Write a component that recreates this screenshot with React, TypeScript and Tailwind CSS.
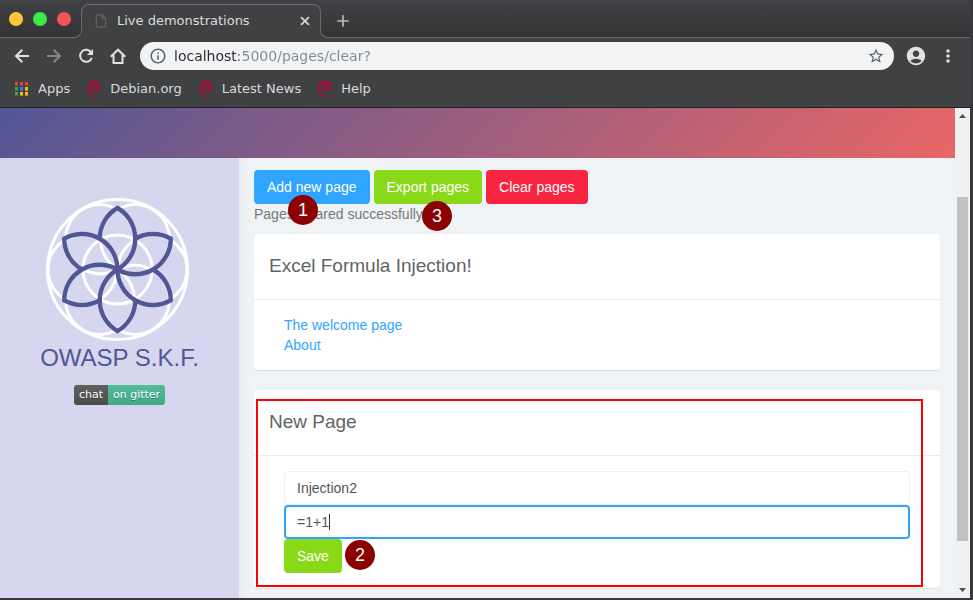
import type { ReactNode } from "react";
import {
  MdAccountCircle,
  MdAdd,
  MdInfoOutline,
  MdMoreVert,
  MdOutlineInsertDriveFile,
  MdStarBorder,
} from "react-icons/md";

const R = 35.5;
const H = 30.74;
const PETALS = [0, 60, 120, 180, 240, 300];

function FlowerLogo() {
  return (
    <svg viewBox="-71.5 -71.5 143 143" className="size-[143px]" role="img" aria-label="OWASP S.K.F. logo" fill="none">
      <g stroke="#ffffff" strokeWidth="3">
        <circle r="70" />
        <circle r="34.5" />
        {PETALS.map((a) => (
          <circle key={a} cx={R - 0.5} cy="0" r="34.5" transform={`rotate(${a})`} />
        ))}
      </g>
      <g stroke="#515695" strokeWidth="4.4" strokeLinejoin="miter">
        {PETALS.map((a) => (
          <path
            key={a}
            transform={`rotate(${a})`}
            d={`M0 0A${R} ${R} 0 0 0 0 ${-2 * H}A${R} ${R} 0 0 0 ${-R / 2} ${-H}`}
          />
        ))}
      </g>
    </svg>
  );
}

function AppsIcon() {
  const rows = [
    ["#ea4335", "#ea4335", "#ea4335"],
    ["#34a853", "#1a88ff", "#fbbc05"],
    ["#34a853", "#fbbc05", "#fbbc05"],
  ];
  return (
    <svg viewBox="0 0 14 14" className="size-3.5" aria-hidden="true">
      {rows.map((row, y) =>
        row.map((color, x) => (
          <g key={`${x}-${y}`}>
            <rect x={x * 5} y={y * 5} width="3" height="3" fill={color} />
            <rect x={x * 5} y={y * 5 + 3} width="3" height="1" fill={color} opacity="0.6" />
          </g>
        )),
      )}
    </svg>
  );
}

function SwirlIcon() {
  return (
    <svg viewBox="0 0 16 16" className="size-4" fill="none" stroke="#c70036" strokeLinecap="round" aria-hidden="true">
      <path d="M9.800 9.300C7.800 9.800 6.500 8.300 6.900 6.600C7.400 4.700 9.800 3.900 11.300 5.100" strokeWidth="1.300" />
      <path
        d="M8.500 9.700C11 10.300 13.300 8.400 13.400 5.900C13.400 2.800 10.800 1 8 1C4.600 1 2 3.500 2 7.200C2 10.600 4.200 14.200 8 15.500"
        strokeWidth="1.500"
      />
      <path d="M3 4.600C4.600 2.200 9.500 0.800 12.200 3.600" strokeWidth="1.600" />
    </svg>
  );
}

function BoldIcon({ className, children }: { className: string; children: ReactNode }) {
  return (
    <svg viewBox="0 0 16 16" className={className} fill="none" stroke="currentColor" strokeWidth="2" aria-hidden="true">
      {children}
    </svg>
  );
}

function IconButton({ label, className = "", children }: { label: string; className?: string; children: ReactNode }) {
  return (
    <button type="button" aria-label={label} className={`flex size-8 items-center justify-center ${className}`}>
      {children}
    </button>
  );
}

function TabStrip() {
  return (
    <div className="flex h-[38px] items-end bg-linear-to-b from-[#404144] to-[#343436]">
      <div className="flex h-full w-[74px] items-center gap-2.5 border-b border-[#6b6c6e] pl-[9px]">
        <button type="button" aria-label="Minimize" className="size-3.5 shrink-0 rounded-full bg-[#fdc538]" />
        <button type="button" aria-label="Maximize" className="size-3.5 shrink-0 rounded-full bg-[#39ea49]" />
        <button type="button" aria-label="Close window" className="size-3.5 shrink-0 rounded-full bg-[#f65058]" />
      </div>
      <div className="bg-[#404143]">
        <div className="size-2 rounded-br-lg border-r border-b border-[#6b6c6e] bg-[#363638]" />
      </div>
      <div className="-mx-px h-[34px] w-60">
        <div className="h-[27px] rounded-t-lg border-x border-t border-[#6b6c6e] bg-[#404143]">
          <div className="flex h-8 items-center pr-2 pl-[11px]">
            <MdOutlineInsertDriveFile className="size-4 text-[#5d5e60]" />
            <span className="ml-2 flex-1 text-[13px] text-[#dcdddf]">Live demonstrations</span>
            <button type="button" aria-label="Close tab">
              <BoldIcon className="size-3.5 text-[#d5d6d8]">
                <path d="M3.500 3.500L12.500 12.500M12.500 3.500L3.500 12.500" />
              </BoldIcon>
            </button>
          </div>
        </div>
        <div className="mx-px -mt-px h-2 bg-[#404143]" />
      </div>
      <div className="bg-[#404143]">
        <div className="size-2 rounded-bl-lg border-b border-l border-[#6b6c6e] bg-[#363638]" />
      </div>
      <div className="flex h-full flex-1 items-center border-b border-[#6b6c6e] pt-1 pl-[5px]">
        <button type="button" aria-label="New tab">
          <MdAdd className="size-5 text-[#b9babc]" />
        </button>
      </div>
    </div>
  );
}

function Toolbar() {
  return (
    <div className="flex h-9 items-center bg-[#404143] pl-1.5 text-[#e0e1e3]">
      <IconButton label="Back">
        <BoldIcon className="size-4">
          <path d="M15 8H2.500M8.300 1.700L2 8L8.300 14.300" />
        </BoldIcon>
      </IconButton>
      <IconButton label="Forward" className="text-[#858688]">
        <BoldIcon className="size-4">
          <path d="M1 8H13.500M7.700 1.700L14 8L7.700 14.300" />
        </BoldIcon>
      </IconButton>
      <IconButton label="Reload">
        <BoldIcon className="size-4">
          <path d="M13.200 4.600A6 6 0 1 0 13.800 9.800" />
          <path d="M15 1V7H9z" fill="currentColor" stroke="none" />
        </BoldIcon>
      </IconButton>
      <IconButton label="Home">
        <BoldIcon className="size-4">
          <path d="M0.700 8.700L8 1.700L15.300 8.700M3.500 7V15H12.500V7" />
        </BoldIcon>
      </IconButton>
      <div className="ml-1.5 flex h-7 flex-1 items-center rounded-full bg-[#f1f3f5] px-[9px] text-[#5f6368]">
        <MdInfoOutline className="size-[18px]" />
        <input
          type="text"
          aria-label="Address"
          defaultValue="localhost:5000/pages/clear?"
          className="ml-[7px] min-w-0 flex-1 bg-[linear-gradient(to_right,#27282b_65px,#85898e_65px)] bg-clip-text text-[14px] text-transparent outline-none"
        />
        <button type="button" aria-label="Bookmark this page">
          <MdStarBorder className="size-[18px]" />
        </button>
      </div>
      <IconButton label="Profile" className="ml-1.5">
        <MdAccountCircle className="size-[22px]" />
      </IconButton>
      <IconButton label="Menu" className="mr-1.5">
        <MdMoreVert className="size-5" />
      </IconButton>
    </div>
  );
}

function Bookmarks() {
  return (
    <nav className="flex h-[34px] items-center gap-4 border-b border-[#232426] bg-[#404143] pb-1 pl-[15px] text-[13px] text-[#d9dadc]">
      <a href="#apps" className="flex items-center gap-[9px]">
        <AppsIcon />
        Apps
      </a>
      {["Debian.org", "Latest News", "Help"].map((name) => (
        <a key={name} href="#bookmark" className="flex items-center gap-2">
          <SwirlIcon />
          {name}
        </a>
      ))}
    </nav>
  );
}

function Marker({ n, className }: { n: number; className: string }) {
  return (
    <span
      className={`absolute z-10 flex size-[30px] items-center justify-center rounded-full bg-[#8b0000] text-[18px] leading-5 text-white ${className}`}
    >
      {n}
    </span>
  );
}

function Card({ title, children }: { title: string; children: ReactNode }) {
  return (
    <section className="relative mb-5 rounded-sm bg-white shadow-[0_1px_1px_rgba(0,0,0,0.08)]">
      <h2 className="border-b border-[#ebecee] px-[15px] pt-5 pb-[21px] text-[19px] leading-6 text-[#5f6468]">{title}</h2>
      <div className="px-[30px] py-[15px]">{children}</div>
    </section>
  );
}

const button = "h-[34px] rounded-[4px] px-[13px] text-white";
const field = "block h-[34px] w-full rounded-[4px] bg-white text-[#555555] outline-none";

function Scrollbar() {
  return (
    <div className="flex w-[15px] flex-col items-center bg-[#f1f1f1]" aria-hidden="true">
      <svg viewBox="0 0 15 15" className="size-[15px]">
        <path d="M4 10h7L7.500 6z" fill="#505050" />
      </svg>
      <div className="flex w-full flex-1 flex-col px-0.5">
        <div className="flex-[74]" />
        <div className="flex-[344] bg-[#c1c1c1]" />
        <div className="flex-[42]" />
      </div>
      <svg viewBox="0 0 15 15" className="size-[15px]">
        <path d="M4 5h7L7.500 9z" fill="#505050" />
      </svg>
    </div>
  );
}

export default function App() {
  return (
    <div className="flex h-screen flex-col border-r-3 border-b-2 border-[#38383d] font-['DejaVu_Sans',sans-serif]">
      <header>
        <TabStrip />
        <Toolbar />
        <Bookmarks />
      </header>
      <div className="flex min-h-0 flex-1 font-['Liberation_Sans',Arial,sans-serif] text-[14px] leading-5">
        <div className="flex min-w-0 flex-1 flex-col overflow-hidden bg-[#eff3f6]">
          <div className="h-[50px] shrink-0 bg-[linear-gradient(135deg,#515695,#e96666)]" />
          <div className="flex flex-1">
            <aside className="flex w-[239px] shrink-0 flex-col items-center bg-[#d6d7ee] pt-10 pr-1">
              <FlowerLogo />
              <div className="pt-px pl-1 text-[24px] leading-8 text-[#515695]">OWASP S.K.F.</div>
              <a
                href="#gitter"
                className="mt-[11px] ml-1 flex h-5 overflow-hidden rounded-[3px] font-['DejaVu_Sans',sans-serif] text-[11px] text-white [text-shadow:0_1px_0_rgba(1,1,1,0.3)]"
              >
                <span className="bg-linear-to-b from-[#606060] to-[#4c4c4c] px-[5px]">chat</span>
                <span className="bg-linear-to-b from-[#52bd9b] to-[#42a888] px-[5px]">on gitter</span>
              </a>
            </aside>
            <main className="min-w-0 flex-1 bg-linear-to-r from-[#e8edf0] to-[#eff3f6] to-[12px] px-[15px] pt-3">
              <div className="relative flex gap-1">
                <button type="button" className={`${button} bg-[#30a5ff]`}>
                  Add new page
                </button>
                <button type="button" className={`${button} bg-[#8ad919]`}>
                  Export pages
                </button>
                <button type="button" className={`${button} bg-[#f9243f]`}>
                  Clear pages
                </button>
                <Marker n={1} className="top-[25px] left-[34px]" />
                <Marker n={3} className="top-[31px] left-[168px]" />
              </div>
              <p className="mb-2.5 text-[#777777]">Pages cleared successfully</p>
              <Card title="Excel Formula Injection!">
                <ul className="text-[#30a5ff]">
                  <li>
                    <a href="#welcome">The welcome page</a>
                  </li>
                  <li>
                    <a href="#about">About</a>
                  </li>
                </ul>
              </Card>
              <Card title="New Page">
                <div className="pointer-events-none absolute top-[9px] right-[17px] bottom-px left-0.5 border-2 border-[#fb0000]" />
                <form>
                  <input
                    type="text"
                    aria-label="Page title"
                    defaultValue="Injection2"
                    className={`${field} border border-[#eeeeee] px-3`}
                  />
                  <div className="relative">
                    <input
                      type="text"
                      aria-label="Page content"
                      defaultValue="=1+1"
                      className={`${field} border-2 border-[#30a5ff] px-[11px]`}
                    />
                    <span className="absolute top-[9px] left-[45px] h-4 w-px bg-[#333333]" />
                  </div>
                  <div className="relative">
                    <button type="button" className={`${button} block bg-[#8ad919]`}>
                      Save
                    </button>
                    <Marker n={2} className="top-px left-[61px]" />
                  </div>
                </form>
              </Card>
            </main>
          </div>
        </div>
        <Scrollbar />
      </div>
    </div>
  );
}
